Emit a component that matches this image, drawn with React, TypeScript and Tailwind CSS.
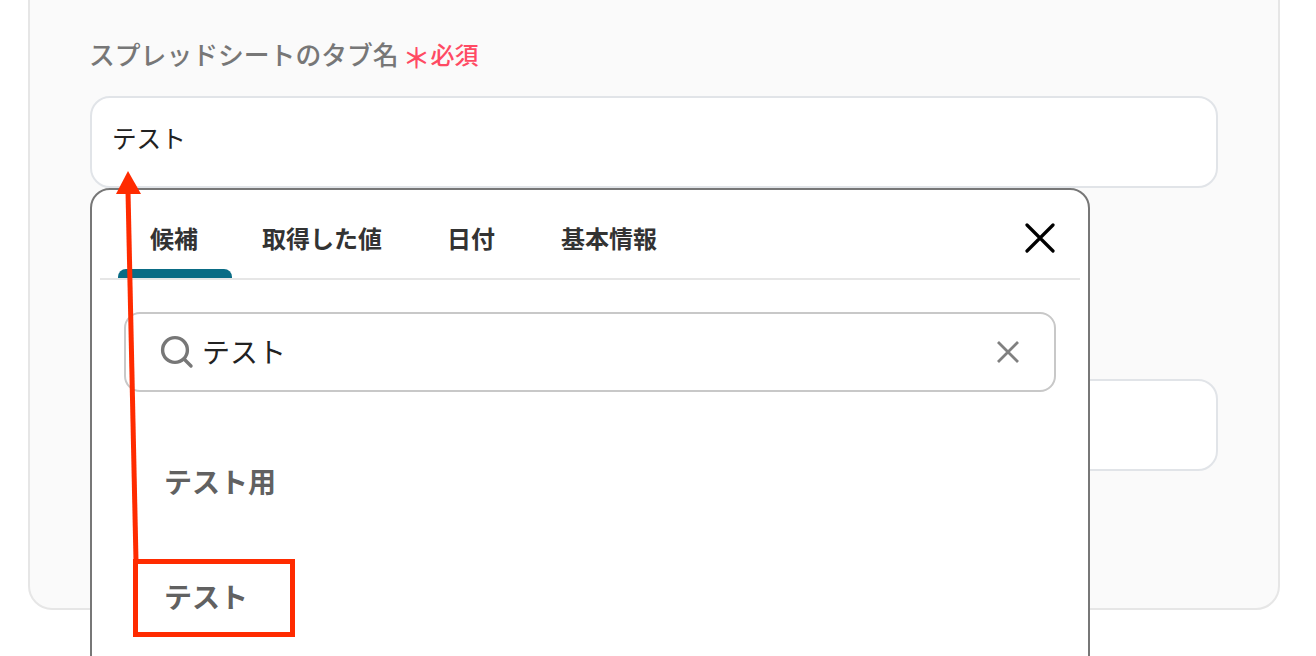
const font = "font-['Noto_Sans_CJK_JP','Noto_Sans',sans-serif]";

const tabs = [
  { label: '候補', active: true, width: 'w-[114px]' },
  { label: '取得した値', active: false, width: 'w-[146px]' },
  { label: '日付', active: false, width: 'w-[116px]' },
  { label: '基本情報', active: false, width: 'w-[124px]' },
];

function PickerTabs() {
  return (
    <div className="mx-[8px] flex h-[90px] items-start border-b-2 border-[#e6e6e6] pl-[18px]">
      <div className="flex gap-[18px]">
        {tabs.map((tab) => (
          <div key={tab.label} className={`relative flex h-[90px] flex-col items-center ${tab.width}`}>
            <span className="mt-[28px] -ml-[2px] text-[24px] leading-[40px] font-bold whitespace-nowrap text-[#333333]">
              {tab.label}
            </span>
            {tab.active && <div className="absolute bottom-[2px] h-[9px] w-full rounded-t-[8px] bg-[#0a6c85]" />}
          </div>
        ))}
      </div>
      <svg className="mt-[33px] ml-auto mr-[25px] h-[30px] w-[30px]" viewBox="0 0 30 30" fill="none" stroke="#000000" strokeWidth="3.2" strokeLinecap="round">
        <path d="M2 2L28 28M28 2L2 28" />
      </svg>
    </div>
  );
}

function PickerSearch() {
  return (
    <div className="mx-[32px] mt-[32px] flex h-[80px] items-center rounded-[16px] border-2 border-[#c8c8c8] bg-white pl-[34px] pr-[35px]">
      <svg className="-mt-[1px] h-[34px] w-[34px]" viewBox="0 0 34 34" fill="none" stroke="#777777" strokeWidth="3.4" strokeLinecap="round">
        <circle cx="15" cy="15" r="12.4" />
        <path d="M24 24L31 31" />
      </svg>
      <span className="ml-[8px] -mt-[3px] text-[28px] leading-none text-[#222222]">テスト</span>
      <svg className="ml-auto h-[22px] w-[22px]" viewBox="0 0 22 22" fill="none" stroke="#808080" strokeWidth="2.8">
        <path d="M1 1L21 21M21 1L1 21" />
      </svg>
    </div>
  );
}

function Picker() {
  return (
    <div className="absolute top-[188px] left-[90px] h-[480px] w-[1000px] rounded-t-[20px] border-2 border-[#777777] bg-white">
      <PickerTabs />
      <PickerSearch />
      <div className="mt-[71px] flex flex-col gap-[79px] pl-[72px] text-[28px] leading-[36px] font-bold text-[#616161]">
        <span>テスト用</span>
        <span>テスト</span>
      </div>
    </div>
  );
}

function Annotation() {
  return (
    <>
      <svg className="absolute top-[165px] left-[110px] h-[400px] w-[40px]" viewBox="0 0 40 400" fill="none">
        <path d="M18 26L26 396" stroke="#ff2b00" strokeWidth="5" />
        <path d="M18 6L31 29H6Z" fill="#ff2b00" />
      </svg>
      <div className="absolute top-[559px] left-[133px] h-[78px] w-[162px] border-[5px] border-[#ff2b00]" />
    </>
  );
}

export default function App() {
  return (
    <div className={`relative h-[656px] w-[1316px] overflow-hidden bg-white ${font}`}>
      <div className="ml-[28px] mr-[36px] -mt-[40px] h-[650px] rounded-[24px] border-2 border-[#e6e6e6] bg-[#fafafa] px-[60px]">
        <div className="mt-[72px] -ml-[1px] flex h-[40px] items-center">
          <span className="text-[25.8px] leading-[40px] font-medium text-[#777777]">スプレッドシートのタブ名</span>
          <span className="mt-[5px] ml-[4px] text-[28px] leading-[32px] font-medium text-[#ff4a63]">＊</span>
          <span className="ml-[0px] text-[24px] leading-[40px] font-medium text-[#ff4a63]">必須</span>
        </div>
        <div className="mt-[22px] flex h-[92px] items-center rounded-[20px] border-2 border-[#e1e4e8] bg-white pb-[10px] pl-[20px] text-[24.6px] text-[#222222]">
          テスト
        </div>
        <div className="mt-[191px] h-[92px] rounded-[20px] border-2 border-[#e1e4e8] bg-white" />
      </div>
      <Picker />
      <Annotation />
    </div>
  );
}
